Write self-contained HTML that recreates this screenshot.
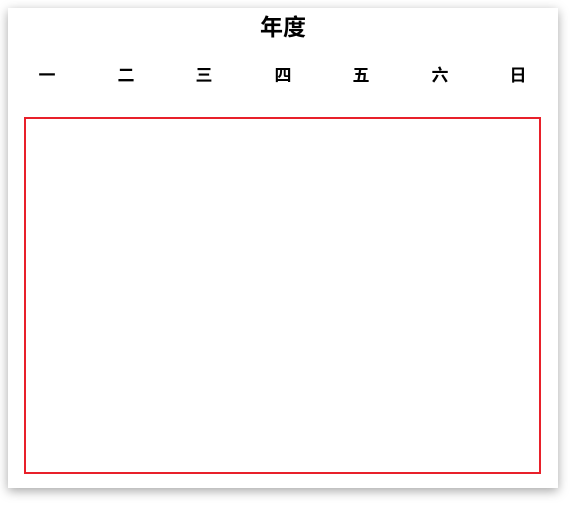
<!DOCTYPE html>
<html><head><meta charset="utf-8"><style>
body{margin:0;width:575px;height:532px;background:#fff;font-family:"Liberation Sans","Noto Sans CJK SC",sans-serif;position:relative;overflow:hidden}
.card{position:absolute;left:8px;top:8px;width:550px;height:480px;background:#fff;box-shadow:0 3px 10px rgba(0,0,0,0.35)}
.t{position:absolute;left:0;width:566px;top:12px;text-align:center;font-size:23px;font-weight:bold;line-height:30px}
.d{position:absolute;top:65px;width:40px;margin-left:-20px;text-align:center;font-size:17px;font-weight:bold;line-height:22px}
.box{position:absolute;left:24px;top:117px;width:513px;height:353px;border:2px solid #e8202a}
</style></head><body>
<div class="card"></div>
<div class="t">年度</div>
<div class="d" style="left:47px">一</div>
<div class="d" style="left:126px">二</div>
<div class="d" style="left:204px">三</div>
<div class="d" style="left:283px">四</div>
<div class="d" style="left:361px">五</div>
<div class="d" style="left:440px">六</div>
<div class="d" style="left:518px">日</div>
<div class="box"></div>
</body></html>
